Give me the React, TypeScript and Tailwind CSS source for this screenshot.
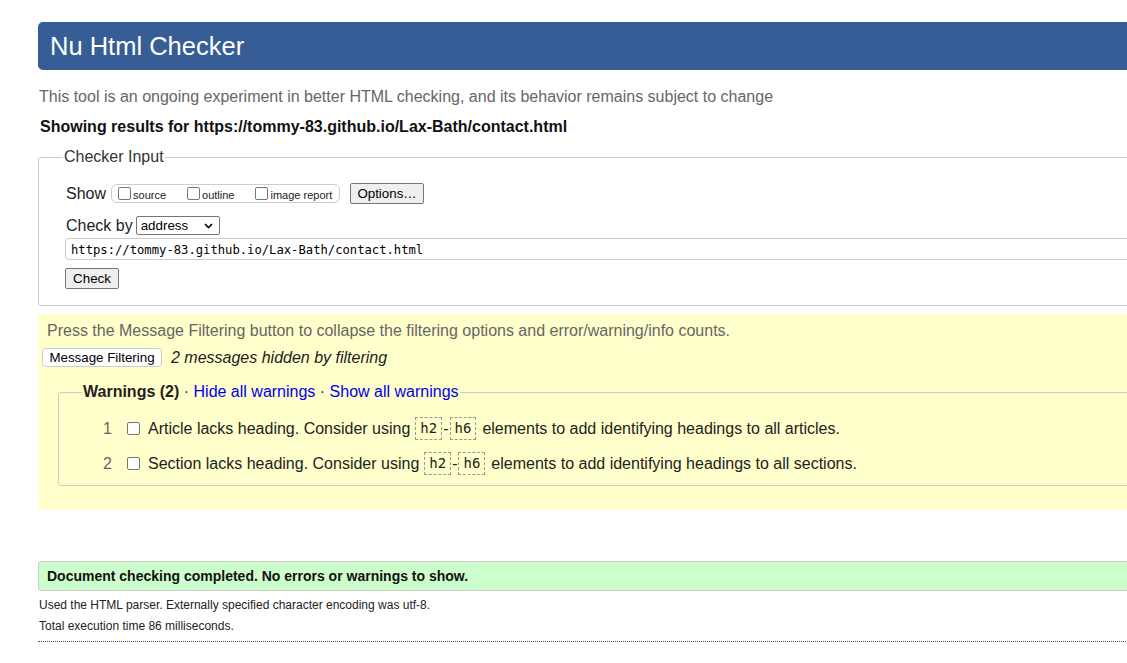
import React from "react";

function Box() {
  return <span className="inline-block w-[13px] h-[13px] border border-[#767676] rounded-[2px] bg-white shrink-0" />;
}

function Code({ children }: { children: React.ReactNode }) {
  return (
    <span className="inline-block border border-dashed border-[#999] px-[4px] font-['DejaVu_Sans_Mono',monospace] text-[14px] leading-[21px] text-[#222]">
      {children}
    </span>
  );
}

function Item({ n, text1, text2 }: { n: number; text1: string; text2: string }) {
  return (
    <div className="flex items-center h-[35px]">
      <span className="w-[53px] text-right text-[#666]">{n}</span>
      <span className="ml-[15px] mr-[8px] flex"><Box /></span>
      <span className="text-[#222]">{text1}</span>
      <span className="ml-[5px]"><Code>h2</Code></span>
      <span className="mx-[1px]">-</span>
      <Code>h6</Code>
      <span className="ml-[6px] text-[#222]">{text2}</span>
    </div>
  );
}

export default function App() {
  return (
    <div className="w-[1127px] h-[663px] overflow-hidden bg-white font-['Liberation_Sans',Arial,sans-serif] text-[16px] leading-[18px] text-[#222]">
      <div className="pl-[38px] pt-[22px] w-[1260px]">
        <div className="h-[48px] bg-[#365d95] rounded-[5px] flex items-center pl-[12px]">
          <h1 className="text-white text-[25.5px] leading-[30px]">Nu Html Checker</h1>
        </div>
        <p className="mt-[18px] ml-[1px] text-[#666]">
          This tool is an ongoing experiment in better HTML checking, and its behavior remains subject to change
        </p>
        <p className="mt-[12px] ml-[2px] font-bold text-[#111]">
          Showing results for https://tommy-83.github.io/Lax-Bath/contact.html
        </p>

        <fieldset className="mt-[12px] border border-[#ccc] rounded-[3px] pl-[27px] pr-[10px] pb-[16px]">
          <legend className="ml-[-3px] px-[1px] text-[#333]">Checker Input</legend>
          <div className="mt-[17px] flex items-center h-[21px]">
            <span className="text-[#222]">Show</span>
            <span className="ml-[5px] flex items-center h-[19px] w-[229px] border border-[#ccc] rounded-[6px] pl-[6px] text-[11px]">
              <Box />
              <span className="ml-[2px] mt-[2px]">source</span>
              <span className="ml-[21px] flex"><Box /></span>
              <span className="ml-[2px] mt-[2px]">outline</span>
              <span className="ml-[21px] flex"><Box /></span>
              <span className="ml-[2px] mt-[2px]">image report</span>
            </span>
            <span className="ml-[10px] h-[21px] w-[74px] flex items-center justify-center bg-[#efefef] border border-[#767676] rounded-[2px] text-[13.33px] text-black">
              Options…
            </span>
          </div>
          <div className="mt-[12px] flex items-center h-[19px]">
            <span>Check by</span>
            <span className="ml-[3px] h-[19px] w-[84px] flex items-center justify-between border border-[#767676] rounded-[2px] pl-[4px] pr-[6px] text-[13.33px] text-black bg-white">
              address
              <svg width="9" height="6" viewBox="0 0 9 6"><path d="M1 1l3.5 3.5L8 1" fill="none" stroke="#000" strokeWidth="1.6" /></svg>
            </span>
          </div>
          <div className="mt-[3px] ml-[-1px] h-[22px] border border-[#ccc] rounded-[4px] flex items-center pt-[1px] pl-[5px] font-['DejaVu_Sans_Mono',monospace] text-[12.2px] text-black">
            https://tommy-83.github.io/Lax-Bath/contact.html
          </div>
          <div className="mt-[8px] ml-[-1px] h-[21px] w-[54px] flex items-center justify-center bg-[#efefef] border border-[#767676] rounded-[2px] text-[13.33px] text-black">
            Check
          </div>
        </fieldset>

        <div className="mt-[8px] h-[196px] bg-[#ffffcc] pt-[8px]">
          <p className="pl-[9px] text-[#666]">
            Press the Message Filtering button to collapse the filtering options and error/warning/info counts.
          </p>
          <div className="mt-[8px] flex items-center h-[19px] pl-[4px]">
            <span className="h-[19px] w-[120px] flex items-center justify-center bg-white border border-[#ccc] rounded-[4px] text-[13.33px] text-black">
              Message Filtering
            </span>
            <span className="ml-[9px] italic text-[#222]">2 messages hidden by filtering</span>
          </div>
          <fieldset className="mt-[16px] ml-[20px] border border-[#ccc] rounded-[3px] pb-[4px]">
            <legend className="ml-[23px] px-[1px]">
              <span className="font-bold text-[#222]">Warnings (2)</span>
              <span className="text-[#333]"> · </span>
              <span className="text-[#0000ee]">Hide all warnings</span>
              <span className="text-[#333]"> · </span>
              <span className="text-[#0000ee]">Show all warnings</span>
            </legend>
            <div className="mt-[10px]">
              <Item n={1} text1="Article lacks heading. Consider using" text2="elements to add identifying headings to all articles." />
              <Item n={2} text1="Section lacks heading. Consider using" text2="elements to add identifying headings to all sections." />
            </div>
          </fieldset>
        </div>

        <div className="mt-[51px] h-[30px] bg-[#ccffcc] border border-[#ccc] rounded-[3px] flex items-center pl-[8px] text-[14px] font-bold text-[#111]">
          Document checking completed. No errors or warnings to show.
        </div>
        <p className="mt-[7px] ml-[1px] text-[12px] leading-[14px] text-[#222]">
          Used the HTML parser. Externally specified character encoding was utf-8.
        </p>
        <p className="mt-[7px] ml-[1px] text-[12px] leading-[14px] text-[#222]">
          Total execution time 86 milliseconds.
        </p>
        <div className="mt-[8px] border-t border-dotted border-[#555]" />
      </div>
    </div>
  );
}
